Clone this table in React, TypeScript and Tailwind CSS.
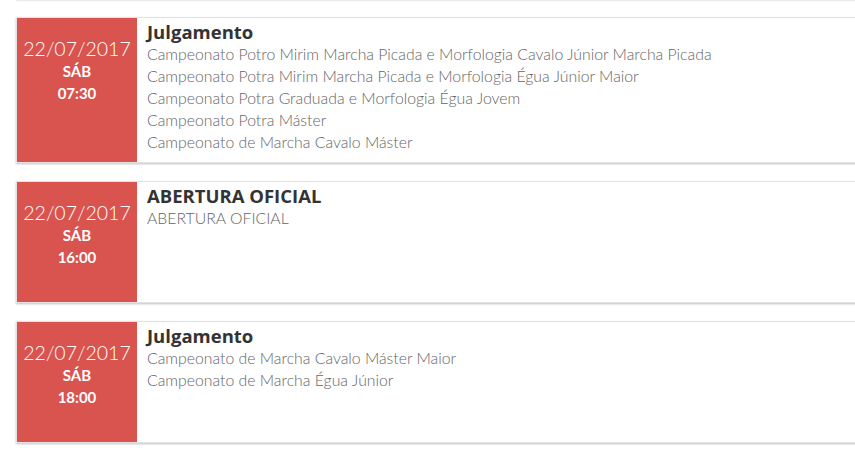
import React from 'react';

interface Evento {
  data: string;
  dia: string;
  hora: string;
  titulo: string;
  itens: string[];
}

const eventos: Evento[] = [
  {
    data: '22/07/2017',
    dia: 'SÁB',
    hora: '07:30',
    titulo: 'Julgamento',
    itens: [
      'Campeonato Potro Mirim Marcha Picada e Morfologia Cavalo Júnior Marcha Picada',
      'Campeonato Potra Mirim Marcha Picada e Morfologia Égua Júnior Maior',
      'Campeonato Potra Graduada e Morfologia Égua Jovem',
      'Campeonato Potra Máster',
      'Campeonato de Marcha Cavalo Máster',
    ],
  },
  {
    data: '22/07/2017',
    dia: 'SÁB',
    hora: '16:00',
    titulo: 'ABERTURA OFICIAL',
    itens: ['ABERTURA OFICIAL'],
  },
  {
    data: '22/07/2017',
    dia: 'SÁB',
    hora: '18:00',
    titulo: 'Julgamento',
    itens: ['Campeonato de Marcha Cavalo Máster Maior', 'Campeonato de Marcha Égua Júnior'],
  },
];

const EventoCard: React.FC<{ evento: Evento }> = ({ evento }) => (
  <div className="flex min-h-[122px] bg-white border border-[#e3e3e3] shadow-[0_1px_2px_rgba(0,0,0,0.25)]">
    {/* Data / hora */}
    <div className="w-[120px] min-h-[120px] shrink-0 bg-[#d9534f] text-white text-center pt-[20px] font-['Lato',sans-serif]">
      <div className="text-[19.5px] leading-[22px] font-light">{evento.data}</div>
      <div className="text-[15px] leading-[22px] font-bold">{evento.dia}</div>
      <div className="text-[15px] leading-[22px] font-bold">{evento.hora}</div>
    </div>

    {/* Descrição */}
    <div className="flex-1 pl-[10px] pt-[3px] pb-[9px]">
      <div className="text-[18.5px] leading-[22px] font-bold text-[#333] font-['Open_Sans',sans-serif]">
        {evento.titulo}
      </div>
      {evento.itens.map((item) => (
        <div key={item} className="text-[15.8px] leading-[22px] font-light text-[#666] font-['Lato',sans-serif]">
          {item}
        </div>
      ))}
    </div>
  </div>
);

export default function App() {
  return (
    <div className="h-[455px] w-[855px] overflow-hidden bg-white">
      <div className="pl-4 w-[880px] flex flex-col gap-[18px] -mt-[121px]">
        {/* previous card, mostly scrolled out of view */}
        <div className="h-[120px] bg-white border border-[#e3e3e3] shadow-[0_1px_2px_rgba(0,0,0,0.25)]" />
        {eventos.map((e, i) => (
          <EventoCard key={i} evento={e} />
        ))}
      </div>
    </div>
  );
}
